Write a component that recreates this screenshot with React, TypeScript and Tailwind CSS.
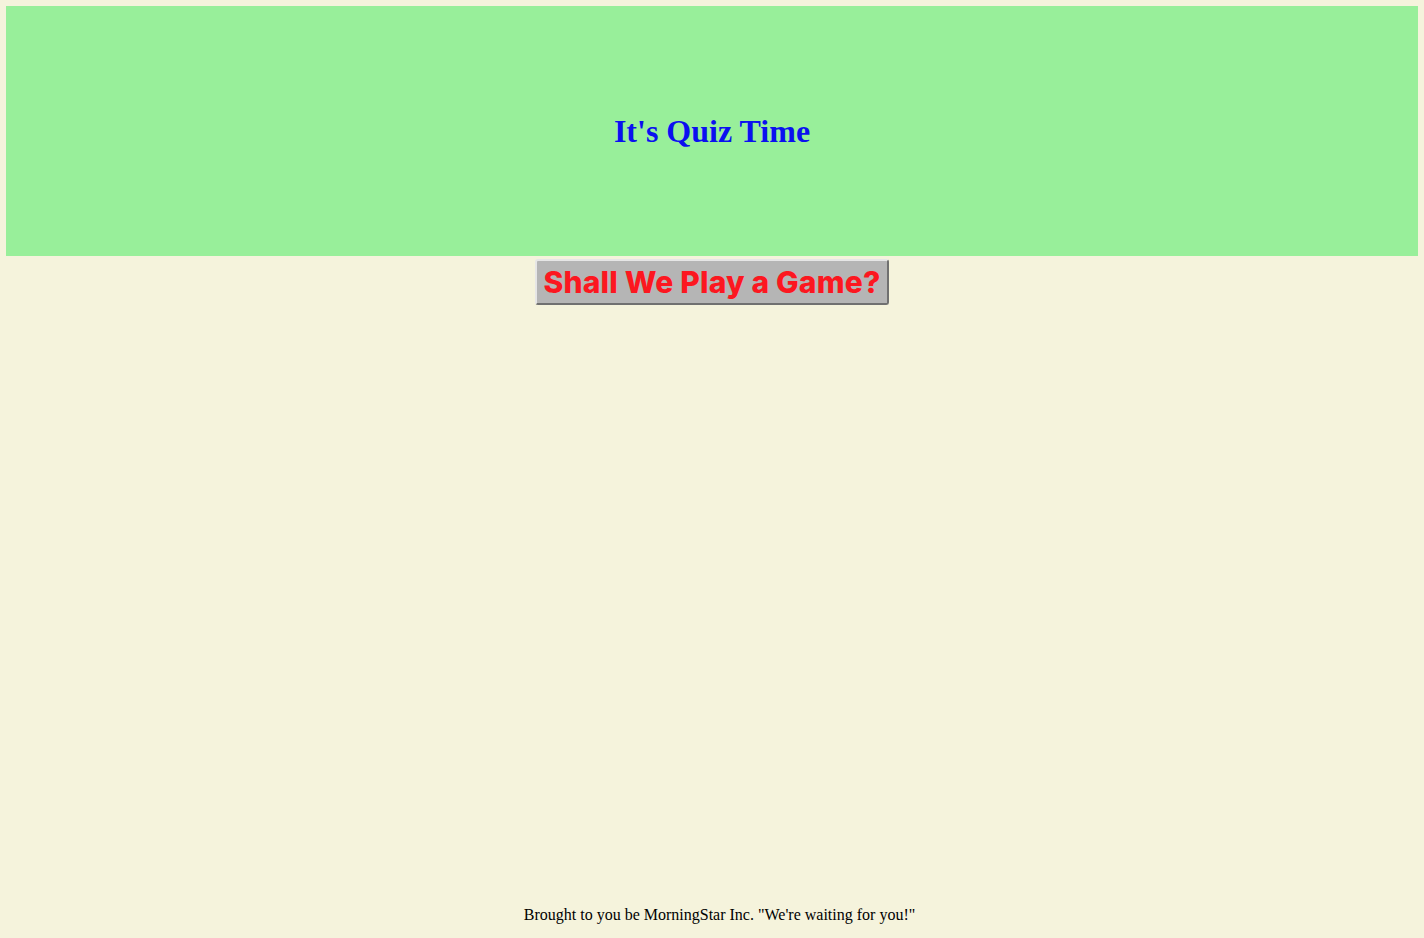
export default function App() {
  return (
    <div className="min-h-screen bg-[#f5f3dc] flex flex-col">
      <div className="mx-[6px] mt-[6px] h-[250px] bg-[#98ef9a] flex items-center justify-center">
        <h1 className="text-[32px] font-bold text-[#0b10f0] leading-none" style={{ fontFamily: '"Liberation Serif", serif' }}>
          It's Quiz Time
        </h1>
      </div>
      <div className="flex justify-center mt-[3px]">
        <button
          className="bg-[#b5b5b5] text-[#fc1720] text-[30px] font-extrabold leading-[38px] px-[6px] py-[2px] border-2 border-[#e6e6e6] border-r-[#707070] border-b-[#707070] rounded-[3px] tracking-[0.2px]"
          style={{ fontFamily: 'Inter, sans-serif' }}
        >
          Shall We Play a Game?
        </button>
      </div>
      <div className="mt-auto pb-[11px] pl-[15px] text-center text-[16px] text-black" style={{ fontFamily: '"Liberation Serif", serif' }}>
        Brought to you be MorningStar Inc. "We're waiting for you!"
      </div>
    </div>
  );
}
